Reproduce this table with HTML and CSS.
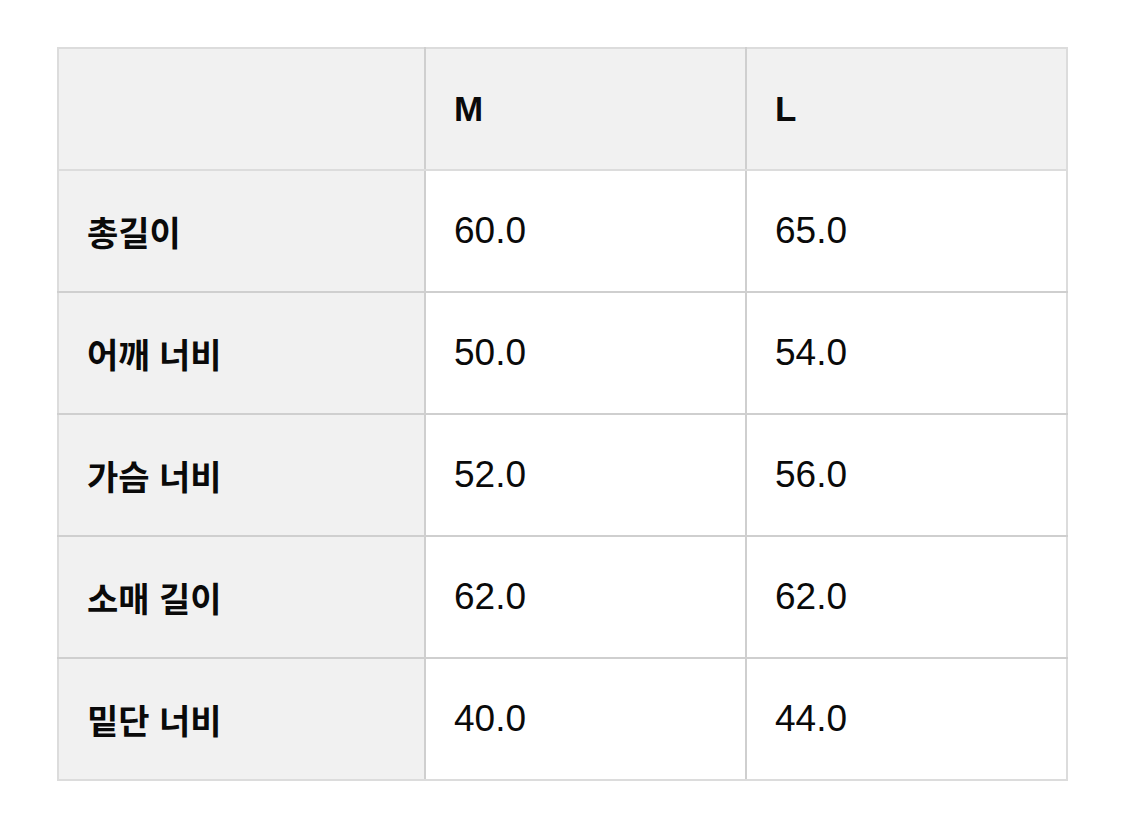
FILE: index.html
```html
<!DOCTYPE html>
<html lang="ko">
<head>
<meta charset="utf-8">
<link rel="stylesheet" href="styles.css">
</head>
<body>
<div class="wrap">
<table class="size-table">
  <colgroup>
    <col class="c-label">
    <col class="c-size">
    <col class="c-size">
  </colgroup>
  <thead>
    <tr><th class="corner"></th><th>M</th><th>L</th></tr>
  </thead>
  <tbody>
    <tr><th>총길이</th><td>60.0</td><td>65.0</td></tr>
    <tr><th>어깨 너비</th><td>50.0</td><td>54.0</td></tr>
    <tr><th>가슴 너비</th><td>52.0</td><td>56.0</td></tr>
    <tr><th>소매 길이</th><td>62.0</td><td>62.0</td></tr>
    <tr><th>밑단 너비</th><td>40.0</td><td>44.0</td></tr>
  </tbody>
</table>
</div>
</body>
</html>
```
FILE: styles.css
```css
html, body {
  margin: 0;
  padding: 0;
  background: #ffffff;
}
body {
  font-family: "Liberation Sans", "Noto Sans CJK KR", sans-serif;
  color: #0a0a0a;
}
.wrap {
  padding: 47px 0 0 57px;
}
.size-table {
  border-collapse: collapse;
  width: 1010px;
  table-layout: fixed;
}
.c-label { width: 367px; }
.c-size { width: 321px; }
.size-table th,
.size-table td {
  height: 122px;
  padding: 0 0 0 28px;
  border: 2px solid #cfcfcf;
  text-align: left;
  vertical-align: middle;
  box-sizing: border-box;
}
.size-table tr:first-child > * { border-top-color: #dcdcdc; }
.size-table tr:last-child > * { border-bottom-color: #dcdcdc; }
.size-table tr > *:first-child { border-left-color: #dcdcdc; }
.size-table tr > *:last-child { border-right-color: #dcdcdc; }
.size-table thead th {
  background: #f1f1f1;
  font-weight: 700;
  font-size: 35px;
  font-family: "Liberation Sans", sans-serif;
}
.size-table tbody th {
  background: #f1f1f1;
  font-weight: 700;
  font-size: 34px;
  font-family: "Noto Sans CJK KR", sans-serif;
}
.size-table td {
  background: #ffffff;
  font-size: 37px;
  font-weight: 400;
}
```
